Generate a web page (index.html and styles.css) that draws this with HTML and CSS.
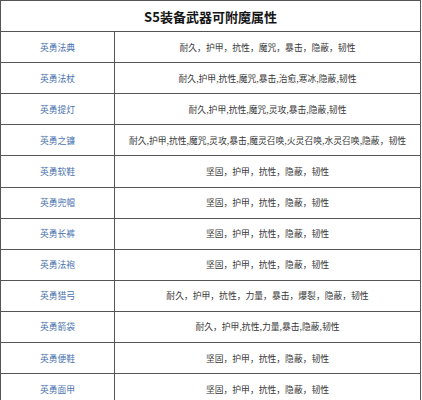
FILE: index.html
```html
<!DOCTYPE html>
<html lang="zh-CN">
<head>
<meta charset="utf-8">
<link rel="stylesheet" href="styles.css">
</head>
<body>
<div class="sheet">
  <div class="title">S5装备武器可附魔属性</div>
  <div class="name">英勇法典</div><div class="attrs">耐久，护甲，抗性，魔咒，暴击，隐蔽，韧性</div>
  <div class="name">英勇法杖</div><div class="attrs">耐久,护甲,抗性,魔咒,暴击,治愈,寒冰,隐蔽,韧性</div>
  <div class="name">英勇提灯</div><div class="attrs">耐久,护甲,抗性,魔咒,灵攻,暴击,隐蔽,韧性</div>
  <div class="name">英勇之镰</div><div class="attrs">耐久,护甲,抗性,魔咒,灵攻,暴击,魔灵召唤,火灵召唤,水灵召唤,隐蔽，韧性</div>
  <div class="name">英勇软鞋</div><div class="attrs">坚固，护甲，抗性，隐蔽，韧性</div>
  <div class="name">英勇兜帽</div><div class="attrs">坚固，护甲，抗性，隐蔽，韧性</div>
  <div class="name">英勇长裤</div><div class="attrs">坚固，护甲，抗性，隐蔽，韧性</div>
  <div class="name">英勇法袍</div><div class="attrs">坚固，护甲，抗性，隐蔽，韧性</div>
  <div class="name">英勇猎弓</div><div class="attrs">耐久，护甲，抗性，力量，暴击，爆裂，隐蔽，韧性</div>
  <div class="name">英勇箭袋</div><div class="attrs">耐久，护甲,抗性,力量,暴击,隐蔽,韧性</div>
  <div class="name">英勇便鞋</div><div class="attrs">坚固，护甲，抗性，隐蔽，韧性</div>
  <div class="name">英勇面甲</div><div class="attrs">坚固，护甲，抗性，隐蔽，韧性</div>
</div>
</body>
</html>
```
FILE: styles.css
```css
html, body {
  margin: 0;
  padding: 0;
  background: #ffffff;
}
.sheet {
  width: 419px;
  display: grid;
  grid-template-columns: 113px 1fr;
  grid-auto-rows: 30.1px;
  gap: 1px;
  padding: 1px;
  background: #555555;
  font-family: "Noto Sans CJK SC", "Noto Sans", sans-serif;
}
.sheet > div {
  background: #ffffff;
  display: flex;
  align-items: center;
  justify-content: center;
  white-space: nowrap;
}
.title {
  grid-column: 1 / 3;
  height: 30px;
  font-size: 13px;
  font-weight: 700;
  color: #151515;
}
.name {
  font-size: 8.8px;
  color: #4a72b0;
}
.attrs {
  font-size: 8.8px;
  color: #383838;
}
```
